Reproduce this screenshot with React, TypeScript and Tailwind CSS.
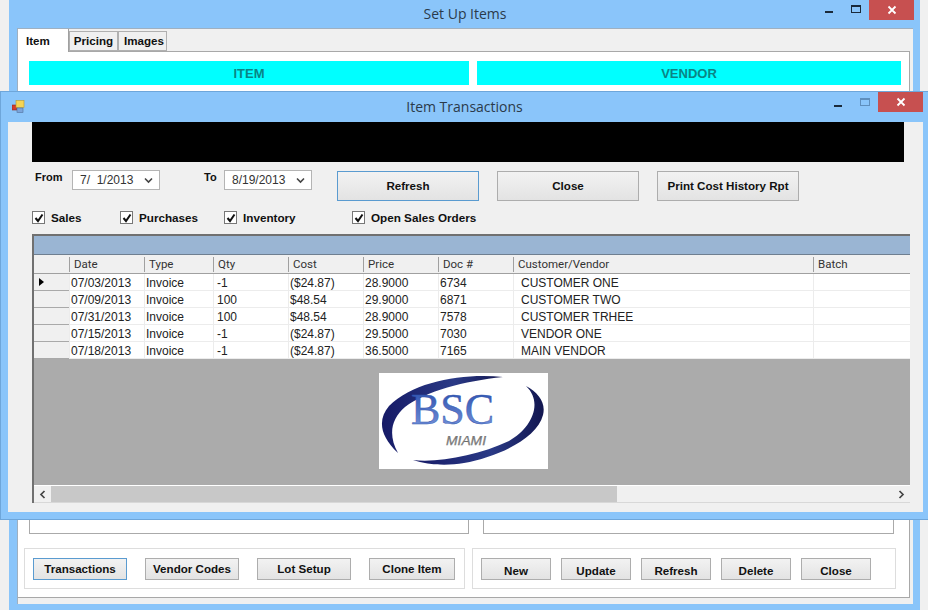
import React from 'react';

const sans = 'font-["Liberation_Sans",Arial,sans-serif]';

const columns = ['Date', 'Type', 'Qty', 'Cost', 'Price', 'Doc #', 'Customer/Vendor', 'Batch'];

const rows = [
    ['07/03/2013', 'Invoice', '-1', '($24.87)', '28.9000', '6734', 'CUSTOMER ONE'],
    ['07/09/2013', 'Invoice', '100', '$48.54', '29.9000', '6871', 'CUSTOMER TWO'],
    ['07/31/2013', 'Invoice', '100', '$48.54', '28.9000', '7578', 'CUSTOMER TRHEE'],
    ['07/15/2013', 'Invoice', '-1', '($24.87)', '29.5000', '7030', 'VENDOR ONE'],
    ['07/18/2013', 'Invoice', '-1', '($24.87)', '36.5000', '7165', 'MAIN VENDOR'],
];

const gridCols = 'grid grid-cols-[35px_75px_69px_75px_75px_75px_75px_300px_97px]';

const WinButtons = ({ faded }: { faded?: boolean }) => (
    <div className="flex items-start">
        <div className={`w-[8px] h-[2px] bg-[#1a2a3a] mr-[18px] ${faded ? 'mt-[13px]' : 'mt-[11px]'}`} />
        <div className={`w-[10px] h-[8px] mr-[8px] border border-t-2 ${faded ? 'mt-[6px] border-[#5f8fbd]' : 'mt-[5px] border-[#1a2a3a]'}`} />
        <div className="w-[45px] h-[20px] bg-[#c75050] flex items-center justify-center">
            <svg width="10" height="10" viewBox="0 0 10 10">
                <path d="M1.5 1.5 L8.5 8.5 M8.5 1.5 L1.5 8.5" stroke="#fff" strokeWidth="1.8" />
            </svg>
        </div>
    </div>
);

const Button = ({ label, className, focused }: { label: string; className: string; focused?: boolean }) => (
    <button
        className={`${className} ${focused ? 'border-[#5a9bd0]' : 'border-[#adadad]'} shrink-0 border bg-gradient-to-b from-[#f2f2f2] to-[#e3e3e3] text-[11.6px] font-bold text-[#111] ${sans}`}
    >
        {label}
    </button>
);

const CheckItem = ({ label, className }: { label: string; className: string }) => (
    <div className={`${className} flex items-center shrink-0`}>
        <span className="w-[13px] h-[13px] bg-white border border-[#777] flex items-center justify-center">
            <svg width="10" height="10" viewBox="0 0 10 10">
                <path d="M1.5 5 L4 8 L8.5 1.5" stroke="#111" strokeWidth="2" fill="none" />
            </svg>
        </span>
        <span className={`ml-[6px] text-[11.7px] font-bold text-[#111] ${sans}`}>{label}</span>
    </div>
);

const DateBox = ({ value }: { value: string }) => (
    <div className="w-[88px] h-[20px] shrink-0 bg-white border border-[#b4b4b4] flex items-center justify-between pl-[7px] pr-[6px]">
        <span className={`text-[12px] text-[#333] whitespace-pre ${sans}`}>{value}</span>
        <svg width="9" height="7" viewBox="0 0 9 7">
            <path d="M1 1.5 L4.5 5 L8 1.5" stroke="#444" strokeWidth="1.6" fill="none" />
        </svg>
    </div>
);

const Logo = () => (
    <svg width="169" height="96" viewBox="0 0 169 96" className="bg-white">
        <defs>
            <linearGradient id="swoosh" x1="0" y1="0" x2="1" y2="0">
                <stop offset="0" stopColor="#161a66" />
                <stop offset="0.6" stopColor="#2a3a86" />
                <stop offset="1" stopColor="#12164f" />
            </linearGradient>
            <linearGradient id="bsc" x1="0" y1="0" x2="0" y2="1">
                <stop offset="0" stopColor="#2448a8" />
                <stop offset="1" stopColor="#7f9be0" />
            </linearGradient>
        </defs>
        <path d="M124 4 C85 0 35 8 10 33 C-1 46 0 62 19 80 C9 62 12 46 26 34 C47 18 85 8 124 4 Z" fill="url(#swoosh)" />
        <path d="M147 13 C160 20 167 30 164 42 C158 66 118 84 85 90 C68 93 48 92 34 87 C60 90 100 82 130 68 C152 56 165 30 147 13 Z" fill="url(#swoosh)" />
        <text x="32" y="51" fontFamily="Liberation Serif, serif" fontSize="44" fill="url(#bsc)" stroke="#2f55ad" strokeWidth="0.4">BSC</text>
        <text x="67" y="71.5" fontFamily="Liberation Sans, sans-serif" fontSize="12" fontStyle="italic" textLength="40" lengthAdjust="spacingAndGlyphs" fill="#8a8a8a" stroke="#555" strokeWidth="0.25">MIAMI</text>
    </svg>
);

const DataGrid = () => (
    <div className={`w-[878px] h-[269px] mt-[10px] ml-[24px] shrink-0 flex flex-col border-t-2 border-l-2 border-t-[#707070] border-l-[#707070] ${sans}`}>
        <div className="h-[19px] bg-[#9ab5d3] border-b border-[#6f7f90]" />
        <div className={`${gridCols} h-[19px] bg-[#f0f0f0] border-b border-[#a0a0a0] text-[11.5px] text-[#333] font-["Roboto",sans-serif]`}>
            <div />
            {columns.map((c) => (
                <div key={c} className="pl-[4px] leading-[15px] border-l border-[#a0a0a0] my-[2px] h-[15px] overflow-hidden">{c}</div>
            ))}
        </div>
        {rows.map((row, i) => (
            <div key={i} className={`${gridCols} h-[17px] bg-white text-[12px] text-[#222]`}>
                <div className="h-[17px] bg-[#f0f0f0] border-b border-[#a9a9a9] flex items-center pl-[5px]">
                    {i === 0 && <div className="w-0 h-0 border-y-[4.5px] border-y-transparent border-l-[5px] border-l-black" />}
                </div>
                {row.map((cell, j) => (
                    <div key={j} className={`${j === 6 ? 'pl-[7px]' : j === 2 ? 'pl-[3px]' : 'pl-[1px]'} h-[17px] leading-[18px] border-b border-l border-[#ececec] whitespace-nowrap`}>{cell}</div>
                ))}
                <div className="h-[17px] border-b border-l border-[#ececec]" />
            </div>
        ))}
        <div className="flex-1 bg-[#ababab] pt-[14px] pl-[345px] border-b border-white">
            <Logo />
        </div>
        <div className="h-[17px] shrink-0 bg-[#f0f0f0] flex items-center border-b border-[#d8d8d8]">
            <div className="w-[17px] flex justify-center">
                <svg width="7" height="9" viewBox="0 0 7 9"><path d="M5.5 1 L2 4.5 L5.5 8" stroke="#444" strokeWidth="1.7" fill="none" /></svg>
            </div>
            <div className="w-[566px] h-full bg-[#c8c8c8]" />
            <div className="flex-1" />
            <div className="w-[17px] flex justify-center">
                <svg width="7" height="9" viewBox="0 0 7 9"><path d="M1.5 1 L5 4.5 L1.5 8" stroke="#444" strokeWidth="1.7" fill="none" /></svg>
            </div>
        </div>
    </div>
);

const TransactionsWindow = () => (
    <div className="absolute left-0 top-[91px] w-[928px] h-[429px] bg-[#8ac5fa] border border-[#6ea6da] border-r-0 flex flex-col">
        <div className="h-[30px] shrink-0 flex justify-between pl-[11px] pr-[5px] relative">
            <svg width="13" height="13" viewBox="0 0 13 13" className="mt-[8px]">
                <rect x="0" y="5" width="5" height="5" fill="#d23b2e" stroke="#8f2a20" strokeWidth="0.6" />
                <rect x="4" y="0.5" width="8" height="7" fill="#f5d555" stroke="#b9982c" strokeWidth="0.6" />
                <rect x="5" y="8" width="6" height="4.5" fill="#7aa5dc" stroke="#50719c" strokeWidth="0.6" />
            </svg>
            <span className='absolute left-0 right-0 text-center top-[5px] text-[14px] leading-[20px] text-[#2a3a4a] font-["Open_Sans",sans-serif]'>Item Transactions</span>
            <div className="relative"><WinButtons faded /></div>
        </div>
        <div className="w-[915px] h-[390px] ml-[7px] bg-[#f0f0f0] flex flex-col">
            <div className="w-[872px] h-[40px] ml-[24px] bg-black shrink-0" />
            <div className="flex h-[39px] mt-[8px] shrink-0 items-start">
                <span className={`ml-[27px] -mt-[1px] w-[37px] text-[11px] font-bold text-[#111] ${sans}`}>From</span>
                <DateBox value="7/  1/2013" />
                <span className={`ml-[44px] -mt-[1px] w-[20px] text-[11px] font-bold text-[#111] ${sans}`}>To</span>
                <DateBox value="8/19/2013" />
                <Button label="Refresh" focused className="w-[142px] h-[30px] ml-[25px] mt-[1px]" />
                <Button label="Close" className="w-[142px] h-[30px] ml-[18px] mt-[1px]" />
                <Button label="Print Cost History Rpt" className="w-[142px] h-[30px] ml-[18px] mt-[1px]" />
            </div>
            <div className="flex h-[13px] mt-[2px] shrink-0">
                <CheckItem label="Sales" className="ml-[24px] w-[88px]" />
                <CheckItem label="Purchases" className="w-[104px]" />
                <CheckItem label="Inventory" className="w-[128px]" />
                <CheckItem label="Open Sales Orders" className="" />
            </div>
            <DataGrid />
        </div>
    </div>
);

const SetUpItemsWindow = () => (
    <div className="ml-[9px] w-[911px] h-[610px] bg-[#8ac5fa] flex flex-col">
        <div className="h-[28px] shrink-0 relative flex justify-end pr-[6px]">
            <span className='absolute left-0 right-[-1px] text-center top-[4px] text-[14px] leading-[20px] text-[#2a3a4a] font-["Open_Sans",sans-serif]'>Set Up Items</span>
            <div className="relative"><WinButtons /></div>
        </div>
        <div className="w-[896px] h-[576px] ml-[8px] bg-[#f0f0f0] border-t border-l border-[#9fb0c0] flex flex-col">
            <div className={`flex h-[22px] shrink-0 text-[11.6px] font-bold text-[#111] ${sans}`}>
                <div className="w-[51px] h-[23px] bg-white border-r border-[#a0a0a0] pl-[8px] pt-[3px] relative z-10">Item</div>
                <div className="w-[49px] h-[20px] mt-[2px] border border-[#b0b0b0] flex items-center justify-center">Pricing</div>
                <div className="w-[49px] h-[20px] mt-[2px] border border-[#b0b0b0] flex items-center justify-center pl-[3px]">Images</div>
            </div>
            <div className="w-[892px] h-[547px] bg-white border-t border-r border-b border-[#a8a8a8] flex flex-col">
                <div className={`flex mt-[9px] h-[24px] shrink-0 text-[13px] font-bold text-[#0a8585] ${sans}`}>
                    <div className="w-[440px] ml-[11px] pt-[2px] bg-[#00ffff] flex items-center justify-center">ITEM</div>
                    <div className="w-[424px] ml-[8px] pt-[2px] bg-[#00ffff] flex items-center justify-center">VENDOR</div>
                </div>
                <div className="flex flex-1 min-h-0 mt-[10px]">
                    <div className="w-[440px] ml-[11px] border border-[#aaa]" />
                    <div className="w-[411px] ml-[14px] border border-[#aaa]" />
                </div>
                <div className="flex h-[41px] mt-[14px] mb-[8px] shrink-0">
                    <div className="w-[441px] ml-[6px] border border-[#ddd] flex items-center pl-[8px]">
                        <Button label="Transactions" focused className="w-[94px] h-[22px]" />
                        <Button label="Vendor Codes" className="w-[94px] h-[22px] ml-[18px]" />
                        <Button label="Lot Setup" className="w-[94px] h-[22px] ml-[18px]" />
                        <Button label="Clone Item" className="w-[86px] h-[22px] ml-[18px]" />
                    </div>
                    <div className="w-[424px] ml-[7px] border border-[#ddd] flex items-center pl-[8px] gap-[10px]">
                        {['New', 'Update', 'Refresh', 'Delete', 'Close'].map((b) => (
                            <Button key={b} label={b} className="w-[70px] h-[22px] pt-[3px]" />
                        ))}
                    </div>
                </div>
            </div>
        </div>
    </div>
);

export default function App() {
    return (
        <div className="relative w-[928px] h-[610px] overflow-hidden bg-[#f0f0f0]">
            <SetUpItemsWindow />
            <TransactionsWindow />
        </div>
    );
}
